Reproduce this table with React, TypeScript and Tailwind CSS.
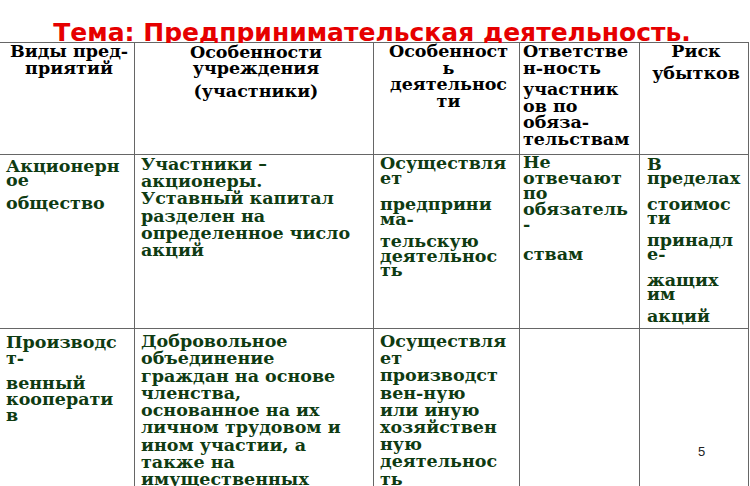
import React from 'react';

type Para = { lines: string[]; cls?: string };
type Cell = { paras: Para[]; cls: string };

const HEAD = 'text-black';
const BODY = 'text-[#0f3b12]';

const headerRow: Cell[] = [
  { cls: `${HEAD} text-center leading-[17px] pt-0 pl-[6px] pr-[2px]`, paras: [{ lines: ['Виды пред-', 'приятий'] }] },
  {
    cls: `${HEAD} text-center leading-[16px] pt-px pl-[6px] pr-[2px]`,
    paras: [{ lines: ['Особенности', 'учреждения'] }, { lines: ['(участники)'], cls: 'mt-[7px]' }],
  },
  {
    cls: `${HEAD} text-center leading-[16.5px] pt-0 pl-[6px] pr-[2px]`,
    paras: [{ lines: ['Особенност', 'ь', 'деятельнос', 'ти'] }],
  },
  {
    cls: `${HEAD} text-left leading-[16.5px] pt-0 pl-[3px] pr-0`,
    paras: [{ lines: ['Ответстве', 'н-ность'] }, { lines: ['участник', 'ов по', 'обяза-', 'тельствам'], cls: 'mt-[5px]' }],
  },
  {
    cls: `${HEAD} text-center leading-[16.5px] pt-0 pl-[6px] pr-[2px]`,
    paras: [{ lines: ['Риск'] }, { lines: ['убытков'], cls: 'mt-[5px]' }],
  },
];

const aoRow: Cell[] = [
  {
    cls: `${BODY} leading-[14px] pt-[4px] pl-[6px] pr-0`,
    paras: [{ lines: ['Акционерн', 'ое'] }, { lines: ['общество'], cls: 'mt-[9px]' }],
  },
  {
    cls: `${BODY} leading-[17.2px] pt-px pl-[6px] pr-0`,
    paras: [{ lines: ['Участники –', 'акционеры.', 'Уставный капитал', 'разделен на', 'определенное число', 'акций'] }],
  },
  {
    cls: `${BODY} leading-[14.5px] pt-px pl-[6px] pr-0`,
    paras: [
      { lines: ['Осуществля', 'ет'] },
      { lines: ['предприни', 'ма-'], cls: 'mt-[12px]' },
      { lines: ['тельскую', 'деятельнос', 'ть'], cls: 'mt-[8px]' },
    ],
  },
  {
    cls: `${BODY} leading-[15.5px] pt-0 pl-[3px] pr-0`,
    paras: [{ lines: ['Не', 'отвечают', 'по', 'обязатель', '-'] }, { lines: ['ствам'], cls: 'mt-[14px]' }],
  },
  {
    cls: `${BODY} leading-[14px] pt-[1.5px] pl-[7px] pr-0`,
    paras: [
      { lines: ['В', 'пределах'] },
      { lines: ['стоимос', 'ти'], cls: 'mt-[12px]' },
      { lines: ['принадл', 'е-'], cls: 'mt-[8px]' },
      { lines: ['жащих', 'им'], cls: 'mt-[12px]' },
      { lines: ['акций'], cls: 'mt-[8px]' },
    ],
  },
];

const coopRow: Cell[] = [
  {
    cls: `${BODY} leading-[16px] pt-[5px] pl-[6px] pr-0`,
    paras: [{ lines: ['Производс', 'т-'] }, { lines: ['венный', 'кооперати', 'в'], cls: 'mt-[9px]' }],
  },
  {
    cls: `${BODY} leading-[17.3px] pt-[4px] pl-[6px] pr-0`,
    paras: [
      {
        lines: [
          'Добровольное',
          'объединение',
          'граждан на основе',
          'членства,',
          'основанное на их',
          'личном трудовом и',
          'ином участии, а',
          'также на',
          'имущественных',
        ],
      },
    ],
  },
  {
    cls: `${BODY} leading-[17.2px] pt-[4px] pl-[6px] pr-0`,
    paras: [
      {
        lines: ['Осуществля', 'ет', 'производст', 'вен-ную', 'или иную', 'хозяйствен', 'ную', 'деятельнос', 'ть'],
      },
    ],
  },
  { cls: `${BODY} pt-[5px] pl-[3px] pr-0`, paras: [] },
  { cls: `${BODY} pt-[5px] pl-[7px] pr-0`, paras: [] },
];

const TableCell: React.FC<{ cell: Cell }> = ({ cell }) => (
  <div className={`bg-white overflow-hidden ${cell.cls}`}>
    {cell.paras.map((p, i) => (
      <div key={i} className={p.cls}>
        {p.lines.map((line, j) => (
          <div key={j} className="whitespace-nowrap">
            {line}
          </div>
        ))}
      </div>
    ))}
  </div>
);

export default function App() {
  return (
    <div className="relative w-[750px] h-[486px] overflow-hidden bg-white">
      {/* Title */}
      <div className="h-[42px] text-center pr-[6px]">
        <div className="pt-[20px] leading-[25px] text-[25px] font-bold text-[#e60000] font-['DejaVu_Sans',sans-serif] whitespace-nowrap">
          Тема: Предпринимательская деятельность.
        </div>
      </div>

      {/* Table */}
      <div className="w-[749px] grid grid-cols-[134px_238px_145px_119px_108px] grid-rows-[111px_173px_200px] gap-px bg-[#666] border-t border-r border-[#666] font-['DejaVu_Serif',serif] font-bold text-[17.5px]">
        {[...headerRow, ...aoRow, ...coopRow].map((cell, i) => (
          <TableCell key={i} cell={cell} />
        ))}
      </div>

      {/* Slide number */}
      <div className="absolute left-[698px] top-[445px] text-[13px] leading-none text-[#222] font-['Liberation_Sans',sans-serif]">
        5
      </div>
    </div>
  );
}
